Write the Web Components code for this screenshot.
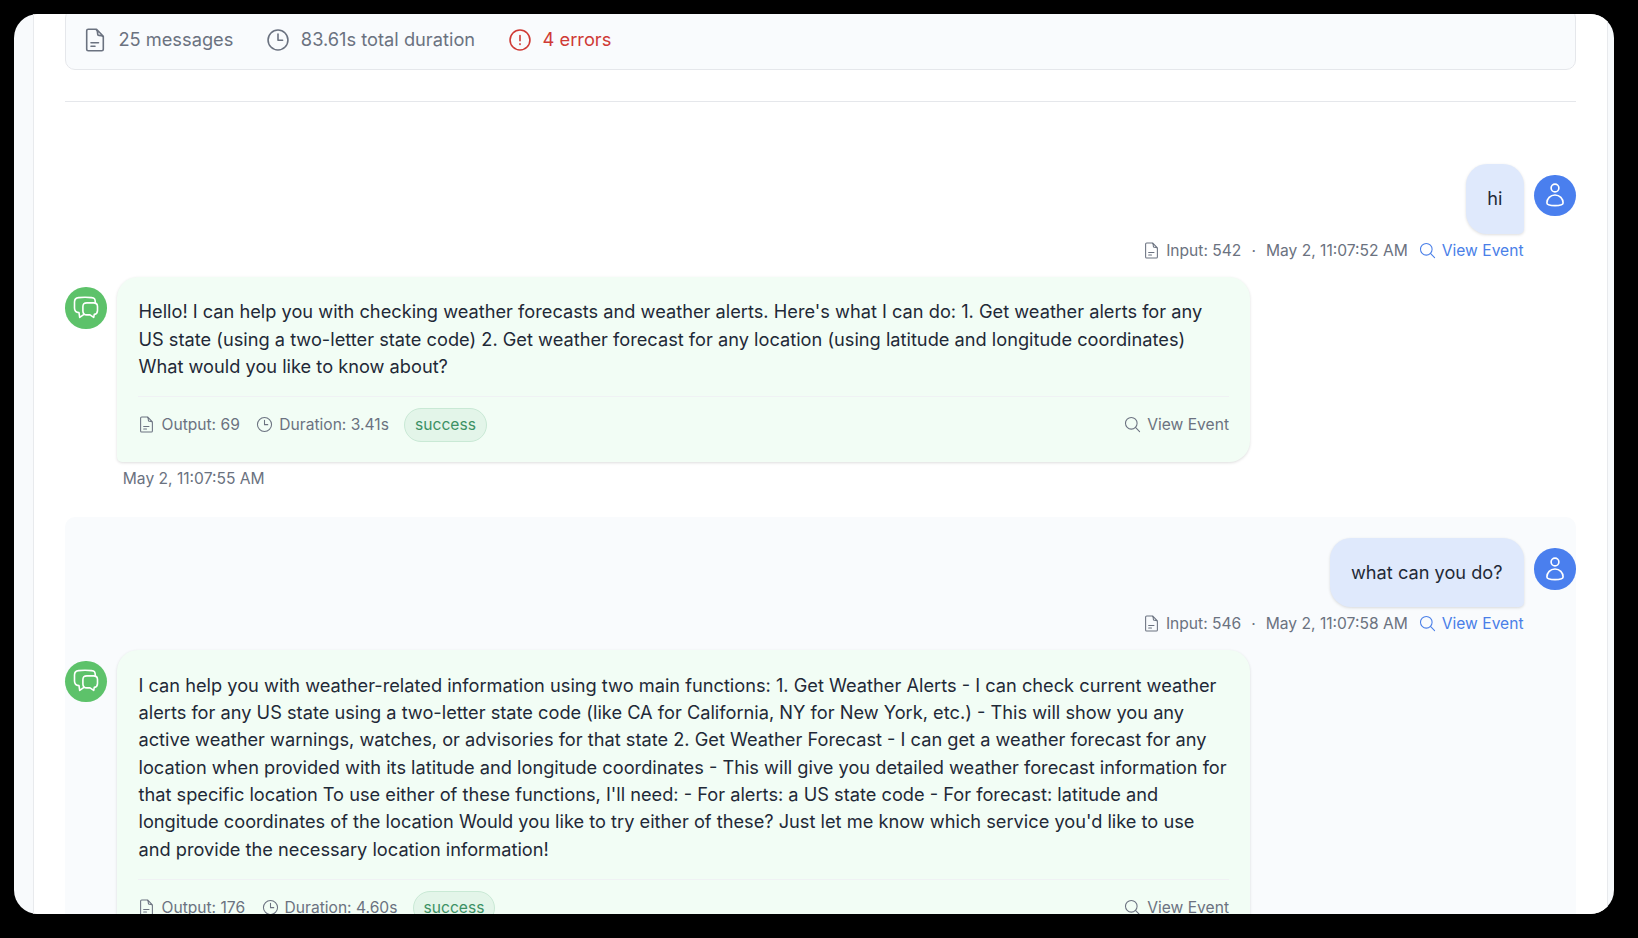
<!DOCTYPE html>
<html lang="en"><head><meta charset="utf-8"><title>Conversation</title>
<style>
html,body{margin:0;height:100%;background:#000;overflow:hidden}
body{font-family:Inter,"Liberation Sans",sans-serif}
</style></head><body>
<app-window>
<stats-bar>
<stat-item icon="doc">25 messages</stat-item>
<stat-item icon="clock">83.61s total duration</stat-item>
<stat-item icon="alert" class="err">4 errors</stat-item>
</stats-bar>
<chat-turn>
<user-message slot="user" tokens="Input: 542" time="May 2, 11:07:52 AM">hi</user-message>
<bot-message tokens="Output: 69" duration="Duration: 3.41s" time="May 2, 11:07:55 AM"><text-line>Hello! I can help you with checking weather forecasts and weather alerts. Here's what I can do: 1. Get weather alerts for any</text-line><text-line>US state (using a two-letter state code) 2. Get weather forecast for any location (using latitude and longitude coordinates)</text-line><text-line>What would you like to know about?</text-line></bot-message>
</chat-turn>
<chat-turn shaded>
<user-message slot="user" tokens="Input: 546" time="May 2, 11:07:58 AM">what can you do?</user-message>
<bot-message tokens="Output: 176" duration="Duration: 4.60s" time=""><text-line>I can help you with weather-related information using two main functions: 1. Get Weather Alerts - I can check current weather</text-line><text-line>alerts for any US state using a two-letter state code (like CA for California, NY for New York, etc.) - This will show you any</text-line><text-line>active weather warnings, watches, or advisories for that state 2. Get Weather Forecast - I can get a weather forecast for any</text-line><text-line>location when provided with its latitude and longitude coordinates - This will give you detailed weather forecast information for</text-line><text-line>that specific location To use either of these functions, I'll need: - For alerts: a US state code - For forecast: latitude and</text-line><text-line>longitude coordinates of the location Would you like to try either of these? Just let me know which service you'd like to use</text-line><text-line>and provide the necessary location information!</text-line></bot-message>
</chat-turn>
</app-window>
<script>
const ICONS={
doc:'<path d="M5.200 1.300H13.500L20.300 8.300V21.200A1.500 1.500 0 0 1 18.800 22.700H5.200A1.500 1.500 0 0 1 3.700 21.200V2.800A1.500 1.500 0 0 1 5.200 1.300zM13 1.400c1.600.9 1.700 2.200 1.700 4.800 0 .9.300 1.200 1.200 1.200 2 0 3.600.2 4.400 1.400M8 14.800h7.500M8 18.300h4"/>',
clock:'<circle cx="12" cy="12" r="9.950"/><path d="M12 6v6.200h4.600"/>',
alert:'<circle cx="12" cy="12" r="9.950"/><path d="M12 7.500v5.300M12 15.900v.6"/>',
search:'<circle cx="10.300" cy="10.300" r="8.200"/><path d="M16.200 16.200l5.800 5.800"/>',
user:'<circle cx="12" cy="5" r="3.900"/><path d="M12 12C7.200 12 3.900 15.600 3.900 20 3.900 21.700 7.500 22.600 12 22.600S20.100 21.700 20.100 20C20.100 15.600 16.800 12 12 12z"/>',
chat:'<path d="M21.300 6.400C21.300 2.600 20.400 1.900 17.500 1.600Q11 1 4.600 1.600C1.500 1.900.5 3.200.5 6V12C.5 15 1.600 16.500 5 16.600L5.700 21.400 9.600 18.700"/><path d="M13 6.900H19.500C22.500 6.900 23.500 7.900 23.500 10.500V14.500C23.500 16.800 22.600 18 20.300 18.400L19.700 21.400 16 18.900H12.800C9.900 18.900 8.900 17.600 8.900 15V10.800C8.900 7.900 10 6.900 13 6.900Z"/>'};
const def=(name,tpl)=>customElements.define(name,class extends HTMLElement{
constructor(){super();this.attachShadow({mode:'open'})}
connectedCallback(){if(this.shadowRoot.childNodes.length)return;const t=document.createElement('template');t.innerHTML=tpl(this);this.shadowRoot.append(t.content.cloneNode(true))}
});
const a=(e,n)=>e.getAttribute(n)||'';
def('ui-icon',e=>`<style>:host{display:block;flex:none;width:var(--s,19px);height:var(--s,19px)}svg{display:block;width:100%;height:100%;overflow:visible;fill:none;stroke:currentColor;stroke-width:var(--w,1.5);stroke-linecap:round;stroke-linejoin:round}</style><svg viewBox="0 0 24 24">${ICONS[a(e,'name')]}</svg>`);
def('app-window',()=>`<style>:host{display:block;box-sizing:border-box;width:1600px;height:900px;margin:14px;border-radius:24px;overflow:hidden;background:#f8fafc;padding:0 6.500px 0 19.400px}
.page{box-sizing:border-box;height:900px;background:#fff;border:solid #e8eaed;border-width:0 1px;padding:0 31px;display:flex;flex-direction:column}</style><div class="page"><slot></slot></div>`);
def('stats-bar',()=>`<style>:host{flex:none;display:block;margin-top:-6px;border-bottom:1px solid #e5e7eb;padding-bottom:31px}
.box{display:flex;gap:32.500px;align-items:center;box-sizing:border-box;height:62px;padding:1px 17px 0;background:#f9fbfd;border:1px solid #e5e7eb;border-radius:10px}</style><div class="box"><slot></slot></div>`);
def('stat-item',e=>`<style>:host{display:flex;align-items:center;gap:11px;font-size:18.250px;line-height:27px;color:#6b7280;white-space:nowrap;--s:24px;--w:1.600}:host(.err){color:#cf3a35}</style><ui-icon name="${a(e,'icon')}"></ui-icon><span><slot></slot></span>`);
def('text-line',()=>`<style>:host{display:block;height:27.300px;white-space:nowrap}</style><slot></slot>`);
def('round-avatar',e=>`<style>:host{flex:none;display:flex;align-items:center;justify-content:center;width:41.600px;height:41.600px;border-radius:50%;color:#fff;margin-top:10.500px;--s:24px;--w:1.600;background:${a(e,'name')=='user'?'#4a7fee':'#5dc26a'}}</style><ui-icon name="${a(e,'name')}"></ui-icon>`);
def('chat-turn',()=>`<style>:host{flex:none;display:block;box-sizing:border-box;height:373.500px;padding-top:20.500px;border-radius:10px}
:host([shaded]){background:#f9fbfd;height:500px}:host(:not([shaded])){margin-top:41.600px}</style><slot name="user"></slot><slot></slot>`);
def('user-message',e=>`<style>:host{display:block;height:112.500px}.r{display:flex;justify-content:flex-end;gap:10.400px}.b{box-sizing:border-box;height:69.500px;padding:21px;font-size:18.200px;line-height:27.300px;background:#dfe9fc;color:#1f2937;border-radius:21px 21px 5px 21px;box-shadow:0 1px 3px #0002;white-space:nowrap}
.m{display:flex;align-items:center;justify-content:flex-end;margin:5px 52px 0 0;height:23px;font-size:15.600px;color:#6b7280;white-space:nowrap;--s:17px;--w:1.500}.d{margin:0 10px}.m ui-icon{margin-right:6px}.v{display:flex;align-items:center;color:#4a7fe8;margin-left:11px}</style>
<div class="r"><div class="b"><slot></slot></div><round-avatar name="user"></round-avatar></div><div class="m"><ui-icon name="doc"></ui-icon><span>${a(e,'tokens')}</span><span class="d">·</span><span>${a(e,'time')}</span><span class="v"><ui-icon name="search"></ui-icon><span>View Event</span></span></div>`);
def('bot-message',e=>`<style>:host{display:block}.r{display:flex;gap:10.500px}.b{box-sizing:border-box;width:1132.500px;padding:21.700px 21px 20.300px;font-size:18.235px;line-height:27.300px;background:#f2fdf5;color:#1f2937;border-radius:21px 21px 21px 5px;box-shadow:0 1px 3px #0002}
.f{display:flex;align-items:center;box-sizing:border-box;margin-top:16px;padding-top:10.500px;height:46px;border-top:1px solid #f0f2f4;font-size:15.600px;color:#6b7280;white-space:nowrap;--s:17px;--w:1.500}.f ui-icon{margin-right:6px}.g{display:flex;align-items:center;margin-right:16.500px}.s{box-sizing:border-box;height:34px;line-height:32px;border:1px solid #c9e9d5;border-radius:17px;background:#e3f5e9;color:#3c9164;padding:0 9.700px;margin-left:-1px}.v{display:flex;align-items:center;margin-left:auto}.t{font-size:15.600px;line-height:23px;color:#6b7280;margin:5px 0 0 57.400px}</style>
<div class="r"><round-avatar name="chat"></round-avatar><div class="b"><slot></slot><div class="f"><span class="g"><ui-icon name="doc"></ui-icon><span>${a(e,'tokens')}</span></span><span class="g"><ui-icon name="clock"></ui-icon><span>${a(e,'duration')}</span></span><span class="s">success</span><span class="v"><ui-icon name="search"></ui-icon><span>View Event</span></span></div></div></div><div class="t">${a(e,'time')}</div>`);
</script></body></html>
